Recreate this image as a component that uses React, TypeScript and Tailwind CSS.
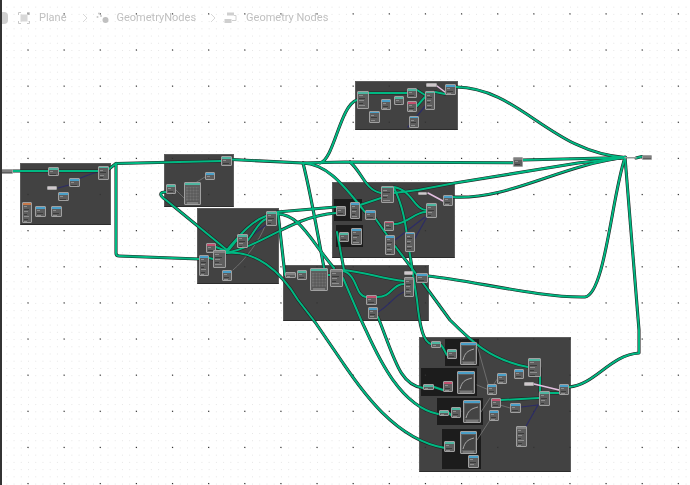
const frames = [
  [19.5, 163, 91, 62],
  [163.5, 153.5, 70.5, 53.5],
  [197, 208, 82, 76],
  [283, 265, 146, 56],
  [332, 182, 123, 75.5],
  [355, 81, 103, 49],
  [419, 337, 152, 134.5],
];

const innerFrames = [
  [334, 199, 28, 22],
  [336, 225, 27, 22],
  [445, 339, 34, 27],
  [421, 368, 56, 28],
  [437, 398, 46, 27],
  [442, 429, 39, 40],
];

// kind: t teal, b blue, r red, o orange, p pill, c curve, g table, n plain
const nodes: [number, number, number, number, string][] = [
  [1, 169, 12, 5, "n"],
  [48, 167, 11, 9, "t"],
  [98, 165.5, 11, 14.5, "t"],
  [69, 178, 11, 9, "b"],
  [47, 186, 10, 4, "p"],
  [58, 192, 11, 9, "b"],
  [22, 202, 10, 21, "o"],
  [35, 206, 11, 11, "b"],
  [51, 206, 11, 11, "b"],
  [221, 156, 11, 10, "t"],
  [205, 172, 10, 7.5, "b"],
  [166, 184, 10, 10, "t"],
  [184, 182, 17, 23, "g"],
  [266, 211, 11, 15, "t"],
  [237, 234, 11, 14, "t"],
  [206, 243, 10, 10, "r"],
  [213, 250, 13, 18, "n"],
  [199, 255, 10, 21, "b"],
  [222, 270, 10, 11, "b"],
  [285, 272, 11, 6, "n"],
  [297, 270, 10, 10, "t"],
  [310, 268, 18, 23, "g"],
  [330, 269, 13, 18, "n"],
  [366, 295, 11, 10, "r"],
  [368, 307, 10, 12, "b"],
  [404, 271, 9, 4, "p"],
  [404, 277, 10, 20, "n"],
  [416, 273, 12, 10, "b"],
  [381, 185.5, 13, 17.5, "t"],
  [418, 191.5, 9, 3.5, "p"],
  [443, 195, 10, 10.5, "b"],
  [426, 203, 11, 15, "t"],
  [365, 210, 11, 10, "b"],
  [384, 220.5, 10, 10.5, "r"],
  [385, 235, 10, 20, "b"],
  [405, 231.5, 10, 20.5, "b"],
  [336, 206, 10, 10, "n"],
  [350, 202, 10, 17, "b"],
  [339, 232, 10, 10, "t"],
  [351, 228, 11, 17, "b"],
  [357, 91, 12, 18, "t"],
  [381, 99, 10, 11, "b"],
  [394, 96, 10, 9, "t"],
  [407, 88, 10, 10, "t"],
  [407, 101, 10, 11, "r"],
  [369, 110.5, 11, 12, "b"],
  [409, 115.5, 10, 12.5, "b"],
  [425, 90.5, 10, 19.5, "t"],
  [445, 84, 11, 11, "b"],
  [426, 83, 11, 4, "p"],
  [513, 157, 10, 10, "n"],
  [642, 155, 10, 5, "n"],
  [431, 341, 10, 7, "t"],
  [447, 349, 10, 10, "t"],
  [460, 342, 17, 23, "c"],
  [423, 384, 11, 6, "t"],
  [443, 381, 10, 11, "r"],
  [457, 371, 18, 23, "c"],
  [439, 410, 10, 6, "t"],
  [451, 407, 10, 11, "t"],
  [463, 400, 18, 23, "c"],
  [444, 441, 11, 11, "t"],
  [460, 431, 17, 23, "c"],
  [468, 455, 11, 13, "b"],
  [487, 384, 10, 11, "b"],
  [497, 373, 10, 11, "b"],
  [491, 398, 10, 10, "r"],
  [489, 410, 10, 11, "b"],
  [514, 369, 10, 10, "b"],
  [510, 403, 11, 10, "b"],
  [528, 358, 13, 19, "t"],
  [524, 382, 10, 4, "p"],
  [539, 391, 11, 15, "t"],
  [559, 384, 10, 11, "b"],
  [516, 426, 11, 21, "n"],
];

const greenWires = [
  "M13 171 L98 171",
  "M109 169 L114 165 L116 163.5",
  "M116 164 L116 253 Q116 256 119 256 L199 259",
  "M116 163.5 L221 161",
  "M232 159.5 L303 163 L345 162 L513 162.7",
  "M523 160 L625 157.5",
  "M636 158 L642 156.5",
  "M320 163 C334 160 340 105 357 100",
  "M456 87 C520 88 550 152 625 157.5",
  "M453 197 C510 200 560 165 625 157.5",
  "M394 193 L418 190 L455 183 L578 163 L625 157.5",
  "M625 157 C630 220 636 290 639 330 L639 353 C610 355 595 385 569 387",
  "M428 276 C470 280 540 298 585 297 C605 294 612 195 625 157.5",
  "M303 163 C310 190 318 235 324 268",
  "M303 163 C325 164 340 180 365 212",
  "M350 162 C362 172 365 190 381 193",
  "M375 218 L387 235",
  "M360 205 L381 198",
  "M277 212 L336 207",
  "M226 253 C265 245 290 217 336 213",
  "M277 214 C300 214 310 240 334 268",
  "M278 213 L285 275",
  "M337 232 L344 270",
  "M394 188 C405 210 406 230 410 255 L417 300 C420 330 424 342 431 344",
  "M394 187 C412 190 415 211 427 210",
  "M394 224 C408 224 415 211 427 212",
  "M395 246 L423 283 L450 320 C470 340 490 360 528 367",
  "M343 278 L362 322 C372 342 395 405 438 414",
  "M378 317 C395 360 400 385 423 388",
  "M226 253 C255 250 280 270 298 300 L315 322 L343 363 C360 388 395 440 445 448",
  "M166 192 C158 192 160 196 166 200 L227 250",
  "M209 258 L213 259",
  "M226 253 C231 248 234 243 237 240",
  "M226 251 C240 235 250 222 266 216",
  "M248 240 C255 232 258 222 266 219",
  "M216 247 L226 251",
  "M343 270 C365 272 380 278 404 281",
  "M343 271 C358 275 355 296 366 297",
  "M377 297 C392 297 392 284 404 284",
  "M369 93 L407 93",
  "M417 90 L425 95",
  "M417 106 L425 97",
  "M435 92 L445 94",
  "M441 345 C444 348 445 353 447 355",
  "M434 387 L443 390",
  "M449 413 L451 415",
  "M501 400 L539 398",
  "M540 368 L540 392",
  "M550 393 L559 393",
  "M328 275 L330 275",
];

const greyWires = [
  "M176 190 L186 200",
  "M205 177 L192 185",
  "M477 345 L488 384",
  "M477 385 L489 390",
  "M481 412 L490 398",
  "M477 440 L490 420",
  "M498 378 L490 390",
  "M500 405 L510 408",
  "M233 270 C245 260 260 240 265 226",
];

const purpleWires = [
  "M98 172 C90 174 80 178 72 182",
  "M69 185 L58 188",
  "M525 428 L538 405",
  "M521 407 L538 405",
  "M408 127 L426 105",
  "M238 246 L266 225",
  "M414 240 L427 217",
  "M395 240 L425 217",
  "M378 312 C390 305 395 295 404 292",
];

const pinkWires = [
  "M428 193 L443 201",
  "M437 86 L445 92",
  "M534 384 L559 390",
];

const minorDots: number[][] = [];
for (let x = -3; x < 92; x++) {
  for (let y = -6; y < 61; y++) {
    minorDots.push([28 + x * 7.226, 50 + y * 7.226]);
  }
}
const majorDots: number[][] = [];
for (let x = 0; x < 19; x++) {
  for (let y = -1; y < 13; y++) {
    majorDots.push([28 + x * 36.13, 50 + y * 36.13]);
  }
}

const headerClass: Record<string, string> = {
  t: "bg-[#4fb5a0]",
  b: "bg-[#4a9fc8]",
  r: "bg-[#c2506e]",
  o: "bg-[#c8794a]",
  n: "bg-[#808080]",
  g: "bg-[#4fb5a0]",
  c: "bg-[#4a9fc8]",
};

function Node({ x, y, w, h, kind }: { x: number; y: number; w: number; h: number; kind: string }) {
  const pos = { left: x, top: y, width: w, height: h };
  if (kind === "p") {
    return <div className="absolute rounded-[1px] border border-[#a8a8a8] bg-[#d0c8cc]" style={pos} />;
  }
  const rows = Math.max(1, Math.floor((h - 3) / 2.5));
  return (
    <div className="absolute overflow-hidden rounded-[1px] border border-[#a0a0a0] bg-[#5e5e5e]" style={pos}>
      <div className={`h-[1.5px] ${headerClass[kind]}`} />
      {kind === "g" && (
        <svg width={w - 2} height={h - 3} className="block">
          <rect x="1" y="2" width={w - 4} height={h - 9} fill="#707070" />
          {[4, 7, 10, 13, 16].map((l) => (
            <line key={l} x1="1" x2={w - 3} y1={l} y2={l} stroke="#444" strokeWidth="0.5" />
          ))}
          {[4, 7, 10, 13].map((l) => (
            <line key={l} x1={l} x2={l} y1="2" y2={h - 7} stroke="#444" strokeWidth="0.5" />
          ))}
          <line x1="2" x2={w - 4} y1={h - 5} y2={h - 5} stroke="#bbb" strokeWidth="0.7" />
        </svg>
      )}
      {kind === "c" && (
        <svg width={w - 2} height={h - 3} className="block">
          <rect x="1" y="1" width={w - 4} height={h - 8} fill="#444" />
          <path d={`M2 ${h - 8} C4 ${h - 15} 6 6 ${w - 4} 4`} fill="none" stroke="#d0d0d0" strokeWidth="0.7" />
          <line x1="2" x2={w - 4} y1={h - 5} y2={h - 5} stroke="#aaa" strokeWidth="0.7" />
        </svg>
      )}
      {kind !== "g" && kind !== "c" && (
        <div className="flex flex-col gap-[1.5px] px-px pt-[1.5px]">
          {Array.from({ length: rows }).map((_, i) => (
            <div
              key={i}
              className={i % 2 ? "h-px bg-[#3c3c3c]" : "h-px bg-[#8e8e8e]"}
              style={{ width: `${i % 3 === 0 ? 45 : i % 3 === 1 ? 80 : 60}%` }}
            />
          ))}
        </div>
      )}
    </div>
  );
}

function Breadcrumb() {
  return (
    <div className="absolute left-0 top-3 flex h-3 items-center text-[11px] text-[#c0c0c0] blur-[0.6px] [font-family:Roboto,'Liberation_Sans',sans-serif]">
      <div className="h-3 w-2 rounded-r-sm bg-[#cfcfcf]" />
      <svg width="12" height="12" viewBox="0 0 12 12" className="ml-2.5 text-[#c8c8c8]">
        <path d="M0.5 3V0.5H3M9 0.5H11.5V3M11.5 9V11.5H9M3 11.5H0.5V9" fill="none" stroke="currentColor" />
        <rect x="2.5" y="2.5" width="7" height="7" fill="#d8d8d8" />
      </svg>
      <span className="ml-[9px]">Plane</span>
      <svg width="6" height="10" viewBox="0 0 6 10" className="ml-[15px]">
        <path d="M1 1L5 5L1 9" fill="none" stroke="#d8d8d8" />
      </svg>
      <svg width="14" height="12" viewBox="0 0 14 12" className="ml-[8px]">
        <circle cx="3" cy="1.5" r="1" fill="#c8c8c8" />
        <circle cx="1.5" cy="5" r="1" fill="#c8c8c8" />
        <circle cx="5" cy="4" r="1" fill="#c8c8c8" />
        <circle cx="9.5" cy="8" r="3" fill="#c0c0c0" />
      </svg>
      <span className="ml-[7px]">GeometryNodes</span>
      <svg width="6" height="10" viewBox="0 0 6 10" className="ml-[14px]">
        <path d="M1 1L5 5L1 9" fill="none" stroke="#d8d8d8" />
      </svg>
      <svg width="13" height="12" viewBox="0 0 13 12" className="ml-[8px]">
        <rect x="3" y="0.5" width="7" height="3" fill="#cfcfcf" />
        <rect x="0.5" y="7" width="7" height="4" fill="#cfcfcf" />
        <path d="M10 3.5H12V8.5H8" fill="none" stroke="#d0d0d0" />
      </svg>
      <span className="ml-[9px]">Geometry Nodes</span>
    </div>
  );
}

export default function App() {
  return (
    <div className="relative h-[485px] w-[690px] overflow-hidden bg-white">
      <svg width="690" height="485" className="absolute left-0 top-0">
        {minorDots.map(([x, y], i) => (
          <rect key={i} x={x} y={y} width="1" height="1" fill="#e6e6e6" />
        ))}
      </svg>
      {frames.map(([x, y, w, h], i) => (
        <div
          key={i}
          className="absolute border border-[#5c5c5c] border-b-[#2c2c2c] bg-[#424242]"
          style={{ left: x, top: y, width: w, height: h }}
        />
      ))}
      {innerFrames.map(([x, y, w, h], i) => (
        <div key={i} className="absolute bg-[#1c1c1c]" style={{ left: x, top: y, width: w, height: h }} />
      ))}

      <svg width="690" height="485" className="absolute left-0 top-0">
        {majorDots.map(([x, y], i) => (
          <rect key={i} x={x - 0.6} y={y - 0.6} width="1.2" height="1.2" fill="#333" />
        ))}
        <g fill="none" strokeLinecap="round" strokeLinejoin="round">
          {greyWires.map((d, i) => (
            <path key={i} d={d} stroke="#777" strokeWidth="0.8" />
          ))}
          {purpleWires.map((d, i) => (
            <path key={i} d={d} stroke="#2c2c66" strokeWidth="1.2" />
          ))}
          {greenWires.map((d, i) => (
            <path key={i} d={d} stroke="#222" strokeWidth="3.1" />
          ))}
          {greenWires.map((d, i) => (
            <path key={i} d={d} stroke="#00b882" strokeWidth="2" />
          ))}
          <path d="M625 157.7 H636" stroke="#999" strokeWidth="1.5" />
          {pinkWires.map((d, i) => (
            <path key={i} d={d} stroke="#e3bfe0" strokeWidth="1.5" />
          ))}
        </g>
      </svg>

      {nodes.map(([x, y, w, h, kind], i) => (
        <Node key={i} x={x} y={y} w={w} h={h} kind={kind} />
      ))}

      <Breadcrumb />
      <div className="absolute bottom-0 left-0 top-0 w-[1.5px] bg-[#333]" />
    </div>
  );
}
